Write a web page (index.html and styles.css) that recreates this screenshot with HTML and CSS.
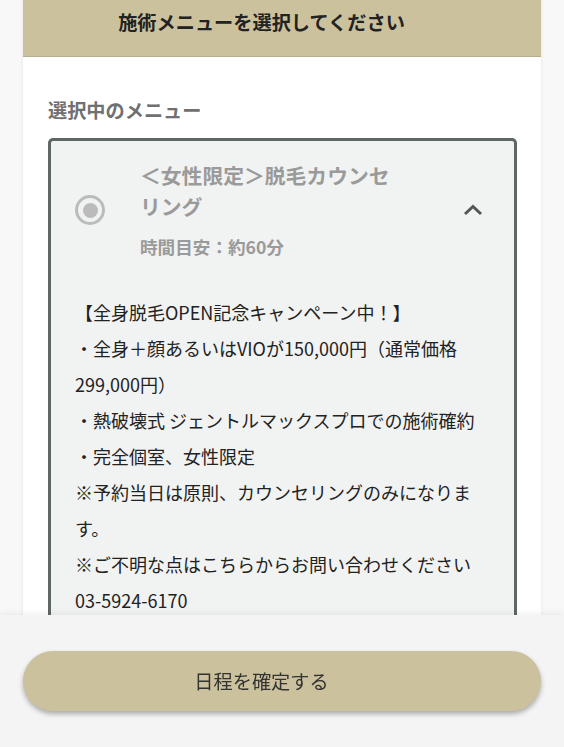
FILE: index.html
```html
<!DOCTYPE html>
<html lang="ja">
<head>
    <meta charset="UTF-8">
    <meta name="viewport" content="width=device-width, initial-scale=1.0">
    <title>施術メニューを選択</title>
    <link rel="stylesheet" href="styles.css">
</head>
<body>
    <div class="card">
        <div class="card-header">施術メニューを選択してください</div>

        <div class="card-body">
            <h2 class="section-title">選択中のメニュー</h2>

            <div class="menu-box">
                <div class="menu-head">
                    <span class="radio"><span class="radio-dot"></span></span>
                    <div class="menu-info">
                        <div class="menu-name">＜女性限定＞脱毛カウンセリング</div>
                        <div class="menu-time">時間目安：約60分</div>
                    </div>
                    <svg class="chevron" width="20" height="12" viewBox="0 0 20 12">
                        <path d="M2 10 L10 2.5 L18 10" fill="none" stroke="#555" stroke-width="3"/>
                    </svg>
                </div>
                <div class="menu-desc">
                    【全身脱毛OPEN記念キャンペーン中！】<br>
                    ・全身＋顔あるいはVIOが150,000円（通常価格299,000円）<br>
                    ・熱破壊式 ジェントルマックスプロでの施術確約<br>
                    ・完全個室、女性限定<br>
                    ※予約当日は原則、カウンセリングのみになります。<br>
                    ※ご不明な点はこちらからお問い合わせください<br>
                    03-5924-6170
                </div>
            </div>
        </div>
    </div>

    <div class="footer">
        <button class="confirm-btn">日程を確定する</button>
    </div>
</body>
</html>
```

FILE: styles.css
```css
body {
    margin: 0;
    background-color: #f8f8f8;
    font-family: "Noto Sans CJK JP", "Noto Sans", sans-serif;
    color: #222;
}
.card {
    margin: 0 23px;
    background-color: #fff;
    min-height: 900px;
    box-shadow: 0 0 4px rgba(0, 0, 0, 0.08);
}
.card-header {
    background-color: #cbc19d;
    border-bottom: 1px solid #b9ae8b;
    height: 57px;
    box-sizing: border-box;
    padding: 7px 41px 0 0;
    text-align: center;
    font-size: 19.2px;
    font-weight: bold;
    line-height: 30px;
    color: #222;
}
.card-body {
    padding: 39px 24px 0 25px;
}
.section-title {
    margin: 0 0 13px;
    font-size: 19.2px;
    line-height: 29px;
    font-weight: bold;
    color: #707070;
}
.menu-box {
    border: 3px solid #5f6666;
    border-radius: 5px;
    background-color: #f1f2f2;
}
.menu-head {
    display: flex;
    align-items: center;
    padding: 19px 31px 19px 24px;
}
.radio {
    width: 30px;
    height: 30px;
    box-sizing: border-box;
    border: 3px solid #bbb;
    border-radius: 50%;
    display: flex;
    align-items: center;
    justify-content: center;
    flex-shrink: 0;
}
.radio-dot {
    width: 15px;
    height: 15px;
    border-radius: 50%;
    background-color: #bbb;
}
.menu-info {
    flex: 1;
    margin: 0 56px 0 35px;
}
.menu-name {
    font-size: 20.8px;
    line-height: 31px;
    font-weight: bold;
    color: #9a9a9a;
}
.menu-time {
    margin-top: 12px;
    font-size: 17.6px;
    line-height: 26px;
    font-weight: bold;
    color: #9a9a9a;
}
.chevron {
    flex-shrink: 0;
}
.menu-desc {
    padding: 15px 24px 20px;
    font-size: 18px;
    line-height: 36px;
    color: #222;
}
.footer {
    position: fixed;
    left: 0;
    right: 0;
    bottom: 0;
    height: 132px;
    background-color: #f4f4f4;
    box-shadow: 0 -2px 6px rgba(0, 0, 0, 0.06);
    padding: 36px 23px 0;
    box-sizing: border-box;
}
.confirm-btn {
    display: block;
    width: 100%;
    height: 60px;
    padding: 0 41px 0 0;
    border: none;
    border-radius: 30px;
    background-color: #cbc19d;
    box-shadow: 0 3px 5px rgba(0, 0, 0, 0.3);
    font-family: "Noto Sans CJK JP", "Noto Sans", sans-serif;
    font-size: 19.2px;
    color: #333;
}
```
